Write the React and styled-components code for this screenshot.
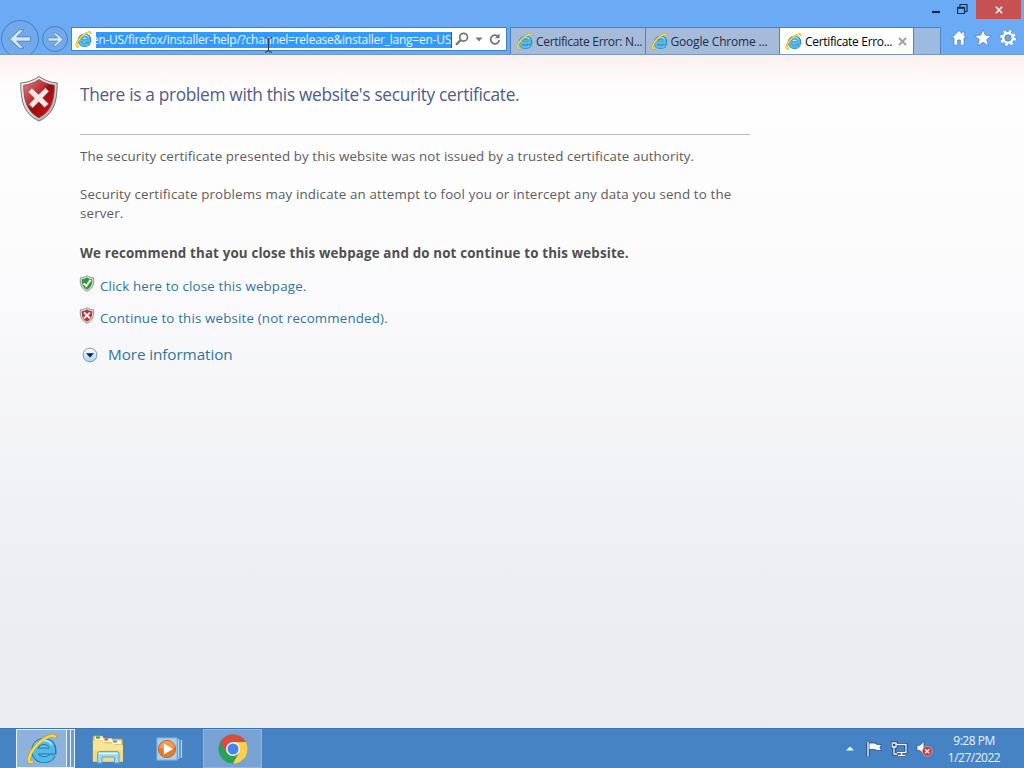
import React from 'react';
import styled, { createGlobalStyle } from 'styled-components';

const tabs = [
  { id: 1, title: 'Certificate Error: N...', spacing: '-0.32px' },
  { id: 2, title: 'Google Chrome ...', spacing: '-0.18px' },
  { id: 3, title: 'Certificate Erro...', spacing: '-0.32px', active: true },
];

const IeIcon = ({ size }) => (
  <svg width={size} height={size} viewBox="0 0 32 32" fill="none">
    <path d="M11 18H27C27 12 23.5 8.5 18 8.5C12.3 8.5 8.8 12.5 8.8 17.8C8.8 23.2 12.5 26.6 18 26.6C22 26.6 25 25 26.5 22" stroke="#1c78ac" strokeWidth="7" />
    <path d="M11 18H26.5C26.5 12 23.5 8.5 18 8.5C12.3 8.5 8.8 12.5 8.8 17.8C8.8 23.2 12.5 26.6 18 26.6C22 26.6 25 25 26.2 22.3" stroke="#4fbdeb" strokeWidth="5.2" />
    <path d="M8 14.5C9.3 10.5 13 7.5 18 7.5C21.5 7.5 24.4 9 26 12" stroke="#a9e6f9" strokeWidth="1.8" />
    <path d="M30 5C29.5 2.5 28.5 2 26 2.3C17.5 3.5 4 16 2.6 26.5C2.3 29.5 4 30.3 7.5 28.5" stroke="#c99916" strokeWidth="3.2" />
    <path d="M29.6 4.5C29 2.7 28 2.4 26 2.7C17.7 4 4.4 16 2.8 26.3C2.6 29 4 29.8 7 28.5" stroke="#fbdc48" strokeWidth="2.3" />
  </svg>
);

const ErrorShield = () => (
  <svg width="40" height="48" viewBox="0 0 40 48">
    <defs>
      <linearGradient id="shieldRim" x1="0" y1="0" x2="1" y2="1">
        <stop offset="0" stopColor="#fafafa" />
        <stop offset="0.5" stopColor="#d9d8d8" />
        <stop offset="1" stopColor="#a3a0a0" />
      </linearGradient>
      <linearGradient id="shieldRed" x1="0" y1="0" x2="1" y2="1">
        <stop offset="0" stopColor="#db8585" />
        <stop offset="0.42" stopColor="#b92c30" />
        <stop offset="0.5" stopColor="#940f13" />
        <stop offset="1" stopColor="#e00f18" />
      </linearGradient>
    </defs>
    <path d="M20 1.5C15 5 9 7.5 1.8 8C2 24 3.5 38.5 20 46C36.5 38.5 38 24 38.2 8C31 7.5 25 5 20 1.5Z" fill="url(#shieldRim)" stroke="#777272" />
    <path d="M20 4.5C15 7.7 10.3 9.6 4.6 10.3C4.8 24 7 36 20 42.8C33 36 35.2 24 35.4 10.3C29.7 9.6 25 7.7 20 4.5Z" fill="url(#shieldRed)" stroke="#8c3535" strokeWidth=".7" />
    <path d="M12.8 13.2L19.6 19.5L26.4 12.8L29.8 16.4L23.6 22.9L29.6 28.9L25.6 32.4L19.8 26.7L13.6 33L10 29.3L15.6 23.2L9.2 17Z" fill="#f2e9ea" stroke="#b85b5c" strokeWidth=".6" />
  </svg>
);

const SmallShield = ({ ok }) => (
  <svg width="16" height="17" viewBox="0 0 16 17">
    <path d="M8 .7C6 2 3.8 2.6 1.4 2.8C.8 8.5 1.8 13.5 8 16.3C14.2 13.5 15.2 8.5 14.6 2.8C12.2 2.6 10 2 8 .7Z" fill="#d7dbd8" stroke="#8b918d" strokeWidth=".9" />
    <path d="M8 2.4C6.4 3.4 4.8 4 2.9 4.2C2.6 8.6 3.5 12.2 8 14.6C12.5 12.2 13.4 8.6 13.1 4.2C11.2 4 9.6 3.4 8 2.4Z" fill={ok ? '#2f9a35' : '#c52b38'} />
    {ok ? (
      <path d="M4.6 8.4L7.2 11L11.6 4.9" fill="none" stroke="#fff" strokeWidth="2" />
    ) : (
      <path d="M5 5.4L11 11.4M11 5.4L5 11.4" stroke="#fff" strokeWidth="2" />
    )}
  </svg>
);

const ArrowGlyph = ({ size, flip }) => (
  <svg width={size} height={size} viewBox="0 0 24 24">
    <path
      transform={flip ? 'translate(24 0) scale(-1 1)' : undefined}
      d="M1.5 12L11.4 2.8H16L8.8 9.8H22.5V14.2H8.8L16 21.2H11.4Z"
      fill="#d8e5f6"
      stroke="#4d85c4"
      strokeWidth="1"
    />
  </svg>
);

const FolderIcon = () => (
  <svg width="34" height="32" viewBox="0 0 34 32">
    <path d="M2 4Q2 3 3 3H11L13 6H30Q31.5 6 31.5 8V28H2Z" fill="#e9c962" stroke="#c9a441" strokeWidth=".7" />
    <path d="M4 3.5H12V7H4ZM12 5.5H21V9H12ZM21 7.5H30V11H21Z" fill="#f8f5e8" />
    <path d="M5 3.5H9V5.5H5Z" fill="#3c9b4b" />
    <path d="M13.5 5.5H17V7.5H13.5Z" fill="#d4523e" />
    <path d="M22 7.5H26V9.5H22Z" fill="#4597cf" />
    <path d="M2 7.5H12L14.5 10.5H22L24 12H32V28.5H2Z" fill="#f7e49b" />
    <path d="M2 17H32V28.5H2Z" fill="#f3da85" />
    <path d="M6.5 30V20.5Q6.5 18.5 8.5 18.5H26Q28 18.5 28 20.5V30H23.5V24H11V30Z" fill="#a5d7ec" stroke="#5ba8c9" />
    <path d="M8 20.5H26.5" stroke="#e0f5fb" strokeWidth="1.4" />
  </svg>
);

const MediaIcon = () => (
  <svg width="28" height="26" viewBox="0 0 28 26">
    <path d="M22.6 3V23M25.4 4V22" fill="none" stroke="#a9d5f1" strokeWidth="1.4" />
    <rect x="1" y="2" width="20" height="22" fill="#a9d0ec" stroke="#7fb9e2" />
    <circle cx="11" cy="13" r="8.6" fill="#e67b2d" stroke="#d1631d" />
    <path d="M3.3 12C4 7.3 7 5 11 5C15 5 18 7.4 18.8 11Q12 13.5 3.3 12Z" fill="#ef9b59" />
    <path d="M7.8 7.4V18.6L17 13Z" fill="#fff" />
  </svg>
);

const ChromeIcon = () => (
  <svg width="30" height="30" viewBox="0 0 30 30">
    <circle cx="15" cy="15" r="14.5" fill="#2ca057" />
    <path d="M15 15L21.1 18.5L15 29.5A14.5 14.5 0 0 0 27.8 8H15Z" fill="#fcd04b" />
    <path d="M2.3 8A14.5 14.5 0 0 1 27.8 8H15L8.9 18.5Z" fill="#dc4b3e" />
    <circle cx="15" cy="15" r="7" fill="#f4f6fa" />
    <circle cx="15" cy="15" r="5.5" fill="#4684ee" />
  </svg>
);

const App = () => (
  <>
    <GlobalStyle />
    <Screen>
      <BrowserFrame>
        <TitleBar>
          <WindowButton>
            <svg width="10" height="19" viewBox="0 0 10 19"><path d="M1 12H9" stroke="#112e52" strokeWidth="2.2" /></svg>
          </WindowButton>
          <WindowButton>
            <svg width="12" height="19" viewBox="0 0 12 19"><path d="M3 7V4.5H10V11.5H8M.5 7.5H7.5V13.5H.5Z" fill="none" stroke="#112e52" strokeWidth="1.2" /><path d="M0 7.8H8" stroke="#112e52" strokeWidth="2" /></svg>
          </WindowButton>
          <CloseButton>
            <svg width="8" height="8" viewBox="0 0 8 8"><path d="M.8.8L7.2 7.2M7.2.8L.8 7.2" stroke="#fff" strokeWidth="1.6" /></svg>
          </CloseButton>
        </TitleBar>
        <NavBar>
          <NavButton $size={38}><ArrowGlyph size={24} /></NavButton>
          <NavButton $size={26}><ArrowGlyph size={17} flip /></NavButton>
          <AddressBar>
            <IeIcon size={17} />
            <Url><span>en-US/firefox/installer-help/?channel=release&amp;installer_lang=en-US</span></Url>
            <AddressTools>
              <svg width="14" height="14" viewBox="0 0 14 14"><circle cx="8.6" cy="5.2" r="3.9" fill="none" stroke="#737373" strokeWidth="1.7" /><path d="M5.8 8L1 12.8" stroke="#737373" strokeWidth="2.2" /></svg>
              <svg width="8" height="5" viewBox="0 0 8 5"><path d="M.5.5H7.5L4 4.5Z" fill="#777" /></svg>
              <svg width="12" height="13" viewBox="0 0 12 13"><path d="M9.2 3.4A4.4 4.4 0 1 0 10.4 7" fill="none" stroke="#737373" strokeWidth="1.7" /><path d="M10.5 .6V5.3H5.8Z" fill="#737373" /></svg>
            </AddressTools>
            <TextCursor viewBox="0 0 7 16"><path d="M0 .7Q3.5 .7 3.5 3V13Q3.5 15.3 0 15.3M7 .7Q3.5 .7 3.5 3M3.5 13Q3.5 15.3 7 15.3" fill="none" stroke="#23364f" /></TextCursor>
          </AddressBar>
          <TabStrip>
            {tabs.map(tab => (
              <Tab key={tab.id} $active={tab.active} $spacing={tab.spacing}>
                <IeIcon size={17} />
                <span>{tab.title}</span>
                {tab.active && (
                  <svg width="9" height="9" viewBox="0 0 9 9"><path d="M1 1L8 8M8 1L1 8" stroke="#a0a0a0" strokeWidth="1.9" /></svg>
                )}
              </Tab>
            ))}
            <NewTab />
          </TabStrip>
          <CommandIcons>
            <svg width="16" height="16" viewBox="0 0 16 16"><path d="M8 .6L.6 8H3V15.2H6.6V10H9.4V15.2H13V8H15.4L13.3 5.8V2H10.8V3.4Z" fill="#fff" stroke="#4c7fb9" strokeWidth=".7" /></svg>
            <svg width="18" height="18" viewBox="0 0 18 18"><path d="M9 .4L11.3 6.2L17.6 6.6L12.7 10.6L14.4 16.8L9 13.3L3.6 16.8L5.3 10.6L.4 6.6L6.7 6.2Z" fill="#fff" stroke="#4c7fb9" strokeWidth=".7" /></svg>
            <svg width="18" height="18" viewBox="0 0 18 18">
              <circle cx="9" cy="9" r="6.5" fill="none" stroke="#4c7fb9" strokeWidth="3.8" strokeDasharray="2.9 2.205" />
              <circle cx="9" cy="9" r="6.5" fill="none" stroke="#fff" strokeWidth="3" strokeDasharray="2.5 2.605" />
              <circle cx="9" cy="9" r="4.6" fill="none" stroke="#fff" strokeWidth="2.6" />
              <circle cx="9" cy="9" r="3.2" fill="#6fa4df" stroke="#4c7fb9" strokeWidth=".7" />
            </svg>
          </CommandIcons>
        </NavBar>
      </BrowserFrame>

      <Page>
        <ErrorShield />
        <Content>
          <Heading>There is a problem with this website's security certificate.</Heading>
          <Paragraph $spacing="0.1px">The security certificate presented by this website was not issued by a trusted certificate authority.</Paragraph>
          <Paragraph $spacing="0.16px">Security certificate problems may indicate an attempt to fool you or intercept any data you send to the<br />server.</Paragraph>
          <Recommendation>We recommend that you close this webpage and do not continue to this website.</Recommendation>
          <ActionRow><SmallShield ok /><PageLink>Click here to close this webpage.</PageLink></ActionRow>
          <ActionRow><SmallShield /><PageLink>Continue to this website (not recommended).</PageLink></ActionRow>
          <MoreRow>
            <svg width="16" height="16" viewBox="0 0 16 16">
              <defs><linearGradient id="more" x2="0" y2="1"><stop stopColor="#fff" /><stop offset="1" stopColor="#a9d3ef" /></linearGradient></defs>
              <circle cx="8" cy="8" r="6.9" fill="url(#more)" stroke="#7f98b0" />
              <path d="M4 6.2H12L8 10.4Z" fill="#082450" />
            </svg>
            <MoreLink>More information</MoreLink>
          </MoreRow>
        </Content>
      </Page>

      <Taskbar>
        <IeTask>
          <TaskButton $width={51} $bright><IeIcon size={32} /></TaskButton>
          <StackEdge /><StackEdge />
        </IeTask>
        <TaskButton $width={66} $plain><FolderIcon /></TaskButton>
        <TaskButton $width={57} $plain><MediaIcon /></TaskButton>
        <ChromeTask $width={59}><ChromeIcon /></ChromeTask>
        <Tray>
          <svg width="8" height="5" viewBox="0 0 8 5"><path d="M0 4.5L4 .5L8 4.5Z" fill="#f1f7ff" /></svg>
          <svg width="17" height="16" viewBox="0 0 17 16"><path d="M2 1V15.5" stroke="#18365f" strokeWidth="3" /><path d="M3 2H8.5Q10 4 15.5 3.5L14 6.7L15.5 9.5Q10 10 8.5 8.5H3Z" fill="#f5faff" stroke="#254c79" strokeWidth=".8" /><path d="M2 1V15.5" stroke="#f4f9ff" strokeWidth="1.4" /></svg>
          <svg width="17" height="16" viewBox="0 0 17 16" fill="none">
            <path d="M5.5 3.5H15V11.5H6M10.5 12V14.5M7 14.5H14M3 6.5V13H6M1.3 2H5V6H1.3Z" stroke="#1c3c66" strokeWidth="3" />
            <path d="M5.5 3.5H15V11.5H6M10.5 12V14.5M7 14.5H14M3 6.5V13H6M1.3 2H5V6H1.3Z" stroke="#f4f9ff" strokeWidth="1.3" />
          </svg>
          <svg width="17" height="17" viewBox="0 0 17 17">
            <path d="M1 5.3H3.7L8 1.5V14L3.7 10.5H1Z" fill="#f5faff" stroke="#274d79" strokeWidth=".7" />
            <circle cx="11.2" cy="11.3" r="4.9" fill="#d33539" stroke="#f2aaa9" strokeWidth=".7" />
            <path d="M9.2 9.3L13.2 13.3M13.2 9.3L9.2 13.3" stroke="#fff" strokeWidth="1.4" />
          </svg>
          <Clock><span>9:28 PM</span><span>1/27/2022</span></Clock>
        </Tray>
      </Taskbar>
    </Screen>
  </>
);

const GlobalStyle = createGlobalStyle`
  * {
    box-sizing: border-box;
  }

  body {
    margin: 0;
    overflow: hidden;
    font-family: 'Open Sans', 'Noto Sans', sans-serif;
  }

  svg {
    display: block;
    flex-shrink: 0;
  }
`;

const Screen = styled.div`
  display: flex;
  flex-direction: column;
  width: 1024px;
  height: 768px;
  overflow: hidden;
`;

const BrowserFrame = styled.header`
  height: 55px;
  overflow: hidden;
  background: #6babf5;
  border-bottom: 1px solid #7599c2;
`;

const TitleBar = styled.div`
  display: flex;
  justify-content: flex-end;
  height: 19px;
  padding-right: 3px;
`;

const WindowButton = styled.div`
  display: flex;
  justify-content: center;
  width: 27px;
`;

const CloseButton = styled.div`
  display: flex;
  align-items: center;
  justify-content: center;
  width: 45px;
  background: #c75050;
`;

const NavBar = styled.div`
  display: flex;
  align-items: flex-start;
  height: 35px;
`;

const NavButton = styled.div`
  display: flex;
  flex-shrink: 0;
  align-items: center;
  justify-content: center;
  width: ${({ $size }) => $size}px;
  height: ${({ $size }) => $size}px;
  margin: ${({ $size }) => ($size > 30 ? '1px 3px 0 1px' : '7px 3px 0 0')};
  border: 1px solid #467fc1;
  border-radius: 50%;
  background: #72a9e9;
`;

const AddressBar = styled.div`
  position: relative;
  display: flex;
  flex-shrink: 0;
  align-items: center;
  width: 436px;
  height: 24px;
  margin-top: 8px;
  padding-left: 3px;
  background: #fff;
  border: 1px solid #4680bd;
`;

const Url = styled.div`
  display: flex;
  justify-content: flex-end;
  width: 356px;
  height: 16px;
  margin: 1px 0 0 4px;
  overflow: hidden;
  background: #3399ff;
  border-right: 1px solid #7c4a20;
  color: #e9f5ff;
  font-size: 12px;
  line-height: 16px;
  letter-spacing: -0.24px;
  white-space: nowrap;
`;

const AddressTools = styled.div`
  display: flex;
  align-items: center;
  gap: 6px;
  margin-left: 3px;
`;

const TextCursor = styled.svg`
  position: absolute;
  left: 193px;
  top: 9px;
  width: 7px;
  height: 16px;
`;

const TabStrip = styled.div`
  display: flex;
  flex-shrink: 0;
  height: 28px;
  margin: 8px 0 0 3px;
  border-left: 1px solid #4d80b9;
`;

const Tab = styled.div`
  display: flex;
  align-items: center;
  width: ${({ $active }) => ($active ? 134 : 134.5)}px;
  height: 27px;
  padding-left: 5px;
  background: ${({ $active }) => ($active ? '#fff' : '#a5bbd9')};
  border: solid #5481b5;
  border-width: 1px 1px 0 0;
  color: ${({ $active }) => ($active ? '#000' : '#1b2e4d')};
  font-size: 12px;
  letter-spacing: ${({ $spacing }) => $spacing};
  white-space: nowrap;

  span {
    margin: 0 6px 0 3px;
  }
`;

const NewTab = styled.div`
  width: 27px;
  height: 27px;
  background: #9dbbe0;
  border: solid #5481b5;
  border-width: 1px 1px 0 0;
`;

const CommandIcons = styled.div`
  display: flex;
  align-items: center;
  gap: 7px;
  height: 20px;
  margin: 9px 0 0 10px;
`;

const Page = styled.main`
  display: flex;
  align-items: flex-start;
  flex: 1;
  padding: 20px 0 0 19px;
  background: linear-gradient(#fdf0f0 0, #fefafa 22px, #fefefe 42px, #fcfcfd 190px, #eeeff3 500px, #ebecf0 100%);
`;

const Content = styled.div`
  width: 670px;
  margin-left: 21px;
  color: #5c5c5c;
  font-size: 13.33px;
`;

const Heading = styled.h1`
  height: 60px;
  margin: 0 0 12px;
  padding-top: 8px;
  border-bottom: 1px solid #bcbcbe;
  color: #4f5b8a;
  font-size: 17.3px;
  font-weight: 400;
  line-height: 24px;
  letter-spacing: -0.32px;
  white-space: nowrap;
`;

const Paragraph = styled.p`
  margin: 0 0 19px;
  line-height: 19px;
  letter-spacing: ${({ $spacing }) => $spacing};
  white-space: nowrap;
`;

const Recommendation = styled.p`
  margin: 21px 0 12px;
  color: #4f4f4f;
  font-weight: 700;
  line-height: 19px;
  letter-spacing: 0.16px;
  white-space: nowrap;
`;

const ActionRow = styled.div`
  display: flex;
  height: 32px;
  margin-left: -1px;
`;

const PageLink = styled.a`
  margin: 2px 0 0 5px;
  color: #33749a;
  line-height: 19px;
  letter-spacing: 0.16px;
  white-space: nowrap;
`;

const MoreRow = styled.div`
  display: flex;
  align-items: center;
  height: 22px;
  margin: 5px 0 0 2px;
`;

const MoreLink = styled.a`
  margin: -3px 0 0 10px;
  color: #33749a;
  font-size: 15.3px;
  letter-spacing: -0.1px;
  white-space: nowrap;
`;

const Taskbar = styled.footer`
  display: flex;
  align-items: center;
  height: 40px;
  background: #4683c4;
  border-top: 1px solid #3b72af;
`;

const IeTask = styled.div`
  display: flex;
  margin-left: 16px;
`;

const TaskButton = styled.div`
  display: flex;
  align-items: center;
  justify-content: center;
  width: ${({ $width }) => $width}px;
  height: 39px;
  background: ${({ $plain, $bright }) => ($plain ? 'transparent' : $bright ? '#8eb2dc' : '#78a2d3')};
  border: ${({ $plain, $bright }) => ($plain ? '0' : $bright ? '1px solid #e8f2fd' : '1px solid #92b5df')};
`;

const StackEdge = styled.div`
  width: 4px;
  border: solid #e8f2fd;
  border-width: 1px 1px 1px 0;
  background: #6e9bd0;
`;

const ChromeTask = styled(TaskButton)`
  margin-left: 5px;
`;

const Tray = styled.div`
  display: flex;
  align-items: center;
  gap: 8px;
  margin-left: auto;
  padding-right: 24px;

  svg:first-child {
    margin-right: 4px;
  }
`;

const Clock = styled.div`
  display: flex;
  flex-direction: column;
  align-items: center;
  width: 52px;
  margin-left: 7px;
  color: #e8f4ff;
  font-size: 12px;
  line-height: 17px;
  letter-spacing: -0.5px;
`;

export default App;
